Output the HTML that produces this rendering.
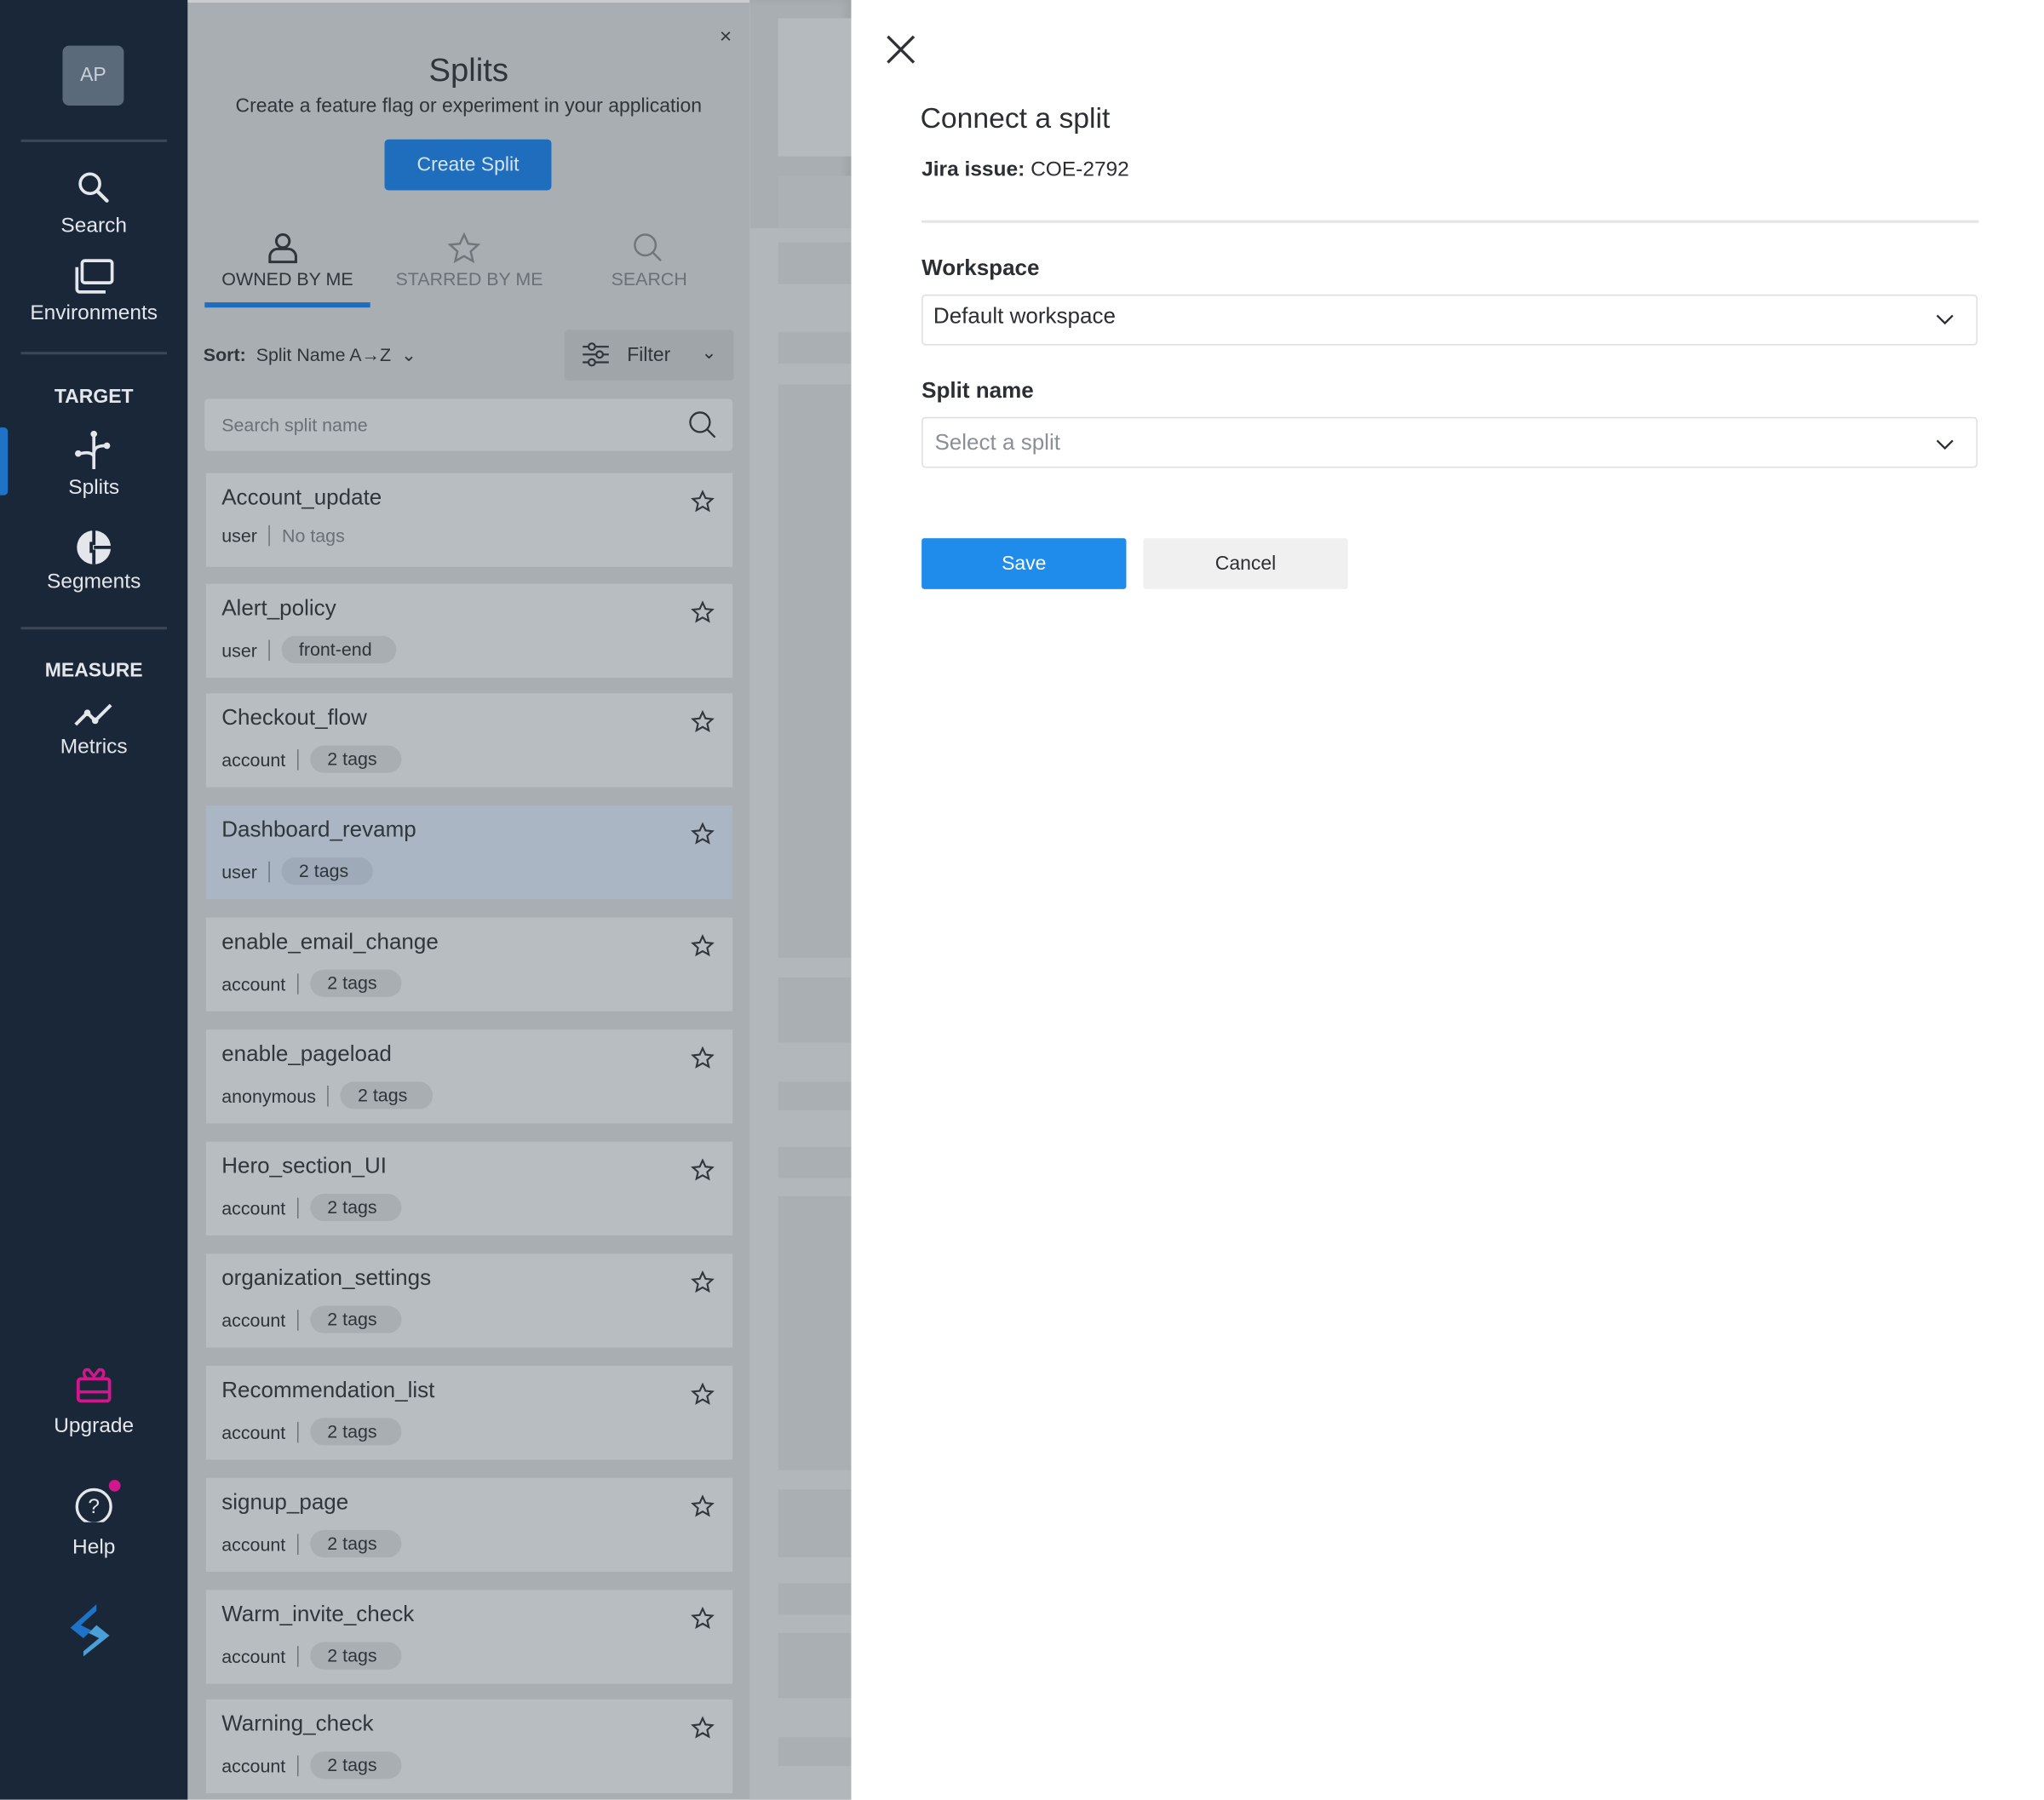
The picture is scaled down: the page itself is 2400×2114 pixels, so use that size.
<!DOCTYPE html>
<html><head><meta charset="utf-8">
<style>
*{box-sizing:border-box;margin:0;padding:0}
html,body{width:2400px;height:2114px;overflow:hidden;background:#fff}
body{font-family:"Liberation Sans",sans-serif}
#w{position:absolute;left:0;top:0;width:1568px;height:1381px;transform:scale(1.5306);transform-origin:0 0;overflow:hidden}
.abs{position:absolute}
.side{left:0;top:0;width:144px;height:1381px;background:#1a2739;color:#e3e6ea}
.lbl{position:absolute;width:144px;text-align:center;font-size:16px;color:#e3e6ea}
.hr{position:absolute;left:16px;width:112px;height:2px;background:#3c4858}
.panel{left:144px;top:0;width:431px;height:1381px;background:#a9aeb2;border-top:2px solid #c9cdd0}
.card{position:absolute;left:14px;width:404px;height:72px;background:#b8bdc1}
.card .t{position:absolute;left:12px;top:9px;font-size:17px;color:#30363c}
.card .m{position:absolute;left:12px;top:40px;font-size:14px;color:#2e343a;display:flex;align-items:center}
.card .bar{width:1px;height:16px;background:#6f767c;margin:0 9px}
.card .tag{background:#a9aeb3;border-radius:11px;padding:2px 19px 3px 13px;font-size:14px;color:#2e343a}
.card svg{position:absolute;right:14px;top:13px}
.strip{left:575px;top:0;width:78px;height:1381px;background:#a9aeb2;box-shadow:inset -4px 0 6px rgba(0,0,0,.06)}
.blk{position:absolute;left:22px;width:56px;background:#b5babe}
.right{left:653px;top:0;width:915px;height:1381px;background:#fff}
</style></head><body><div id="w">

<div class="abs side">
  <div class="abs" style="left:48px;top:35px;width:47px;height:46px;background:#5b6a7b;border-radius:5px;color:#c9d0d8;font-size:15px;text-align:center;line-height:46px">AP</div>
  <div class="hr" style="top:107px"></div>
  <svg class="abs" style="left:58px;top:130px" width="28" height="28" viewBox="0 0 28 28"><circle cx="11" cy="11" r="7.5" fill="none" stroke="#e3e6ea" stroke-width="2.4"/><path d="M16.5 16.5L24 24" stroke="#e3e6ea" stroke-width="2.8" stroke-linecap="round"/></svg>
  <div class="lbl" style="top:165px">Search</div>
  <svg class="abs" style="left:56px;top:198px" width="32" height="30" viewBox="0 0 32 30"><rect x="7" y="2" width="23" height="17" rx="2" fill="none" stroke="#e3e6ea" stroke-width="2.4"/><path d="M3 7v17a2 2 0 0 0 2 2h20" fill="none" stroke="#e3e6ea" stroke-width="2.4"/></svg>
  <div class="lbl" style="top:232px">Environments</div>
  <div class="hr" style="top:270px"></div>
  <div class="lbl" style="top:296px;font-weight:bold;font-size:15px">TARGET</div>
  <div class="abs" style="left:0;top:328px;width:6px;height:52px;background:#1f73c6;border-radius:0 3px 3px 0"></div>
  <svg class="abs" style="left:54px;top:330px" width="36" height="32" viewBox="0 0 36 32"><path d="M18 3v27M18 18c0-5 4-6 9-6M18 20c-2-3-6-3-10-2" fill="none" stroke="#e3e6ea" stroke-width="2.4"/><circle cx="18" cy="3" r="2.5" fill="#e3e6ea"/><circle cx="28" cy="12" r="2.5" fill="#e3e6ea"/><circle cx="6" cy="18" r="2.5" fill="#e3e6ea"/></svg>
  <div class="lbl" style="top:366px">Splits</div>
  <svg class="abs" style="left:58px;top:406px" width="28" height="28" viewBox="0 0 28 28"><circle cx="14" cy="14" r="13" fill="#e3e6ea"/><path d="M14 1v10h-2v6h2v10M14 14h13" stroke="#1a2739" stroke-width="2.5" fill="none"/></svg>
  <div class="lbl" style="top:438px">Segments</div>
  <div class="hr" style="top:481px"></div>
  <div class="lbl" style="top:506px;font-weight:bold;font-size:15px">MEASURE</div>
  <svg class="abs" style="left:55px;top:538px" width="34" height="22" viewBox="0 0 34 22"><path d="M3 18l9-9 6 6 12-12" fill="none" stroke="#e3e6ea" stroke-width="2.6"/><circle cx="12" cy="9" r="2.5" fill="#e3e6ea"/><circle cx="18" cy="15" r="2.5" fill="#e3e6ea"/></svg>
  <div class="lbl" style="top:565px">Metrics</div>
  <svg class="abs" style="left:57px;top:1047px" width="30" height="30" viewBox="0 0 30 30"><rect x="3" y="11" width="24" height="17" rx="2" fill="none" stroke="#d0178b" stroke-width="2.5"/><path d="M3 21h24M10 11c-4-3-3-8 1-7l4 5 4-5c4-1 5 4 1 7" fill="none" stroke="#d0178b" stroke-width="2.3"/></svg>
  <div class="lbl" style="top:1086px">Upgrade</div>
  <svg class="abs" style="left:56px;top:1134px" width="40" height="34" viewBox="0 0 40 34"><circle cx="16" cy="22" r="13" fill="none" stroke="#e3e6ea" stroke-width="2.2"/><text x="16" y="27" font-size="16" fill="#e3e6ea" text-anchor="middle" font-family="Liberation Sans">?</text><circle cx="32" cy="6" r="4.5" fill="#d0178b"/></svg>
  <div class="lbl" style="top:1179px">Help</div>
  <svg class="abs" style="left:50px;top:1229px" width="38" height="44" viewBox="0 0 38 44"><path d="M24 2L4 20l10 8 6-6-8-4 12-11z" fill="#1f73c6"/><path d="M14 42l20-16-10-8-6 6 8 4-12 10z" fill="#4a9fd6"/></svg>
</div>

<div class="abs panel">
  <div class="abs" style="left:408px;top:18px;font-size:16px;color:#30363c">×</div>
  <div class="abs" style="left:0;width:431px;top:38px;text-align:center;font-size:25px;color:#2f353b">Splits</div>
  <div class="abs" style="left:0;width:431px;top:71px;text-align:center;font-size:15px;color:#2f353b">Create a feature flag or experiment in your application</div>
  <div class="abs" style="left:151px;top:105px;width:128px;height:39px;background:#1f6ebd;border-radius:3px;color:#d7e3ef;font-size:15px;text-align:center;line-height:39px">Create Split</div>
  <svg class="abs" style="left:60px;top:175px" width="26" height="26" viewBox="0 0 26 26"><circle cx="13" cy="8" r="5" fill="none" stroke="#2f353b" stroke-width="2"/><path d="M3 24v-4a6 6 0 0 1 6-6h8a6 6 0 0 1 6 6v4z" fill="none" stroke="#2f353b" stroke-width="2"/></svg>
  <div class="abs" style="left:13px;width:127px;top:204px;text-align:center;font-size:14px;color:#2f353b">OWNED BY ME</div>
  <div class="abs" style="left:13px;top:230px;width:127px;height:4px;background:#1f6ebd"></div>
  <svg class="abs" style="left:199px;top:176px" width="26" height="26" viewBox="0 0 26 26"><path d="M13 2l3.2 7 7.6.8-5.7 5.1 1.7 7.5L13 18.5l-6.8 3.9 1.7-7.5L2.2 9.8l7.6-.8z" fill="none" stroke="#6f767c" stroke-width="1.6"/></svg>
  <div class="abs" style="left:155px;width:122px;top:204px;text-align:center;font-size:14px;color:#6a7077">STARRED BY ME</div>
  <svg class="abs" style="left:340px;top:175px" width="26" height="26" viewBox="0 0 26 26"><circle cx="11" cy="11" r="8" fill="none" stroke="#6f767c" stroke-width="1.6"/><path d="M17 17l6 6" stroke="#6f767c" stroke-width="1.6"/></svg>
  <div class="abs" style="left:300px;width:108px;top:204px;text-align:center;font-size:14px;color:#6a7077">SEARCH</div>
  <div class="abs" style="left:12px;top:262px;font-size:14px;color:#2f353b"><b>Sort:</b>&nbsp; Split Name A→Z &nbsp;⌄</div>
  <div class="abs" style="left:289px;top:251px;width:130px;height:39px;background:#a0a5aa;border-radius:3px"></div>
  <svg class="abs" style="left:302px;top:260px" width="22" height="20" viewBox="0 0 22 20"><path d="M1 4h20M1 10h20M1 16h20" stroke="#2f353b" stroke-width="1.4"/><circle cx="8" cy="4" r="2.5" fill="#a0a5aa" stroke="#2f353b" stroke-width="1.4"/><circle cx="14" cy="10" r="2.5" fill="#a0a5aa" stroke="#2f353b" stroke-width="1.4"/><circle cx="8" cy="16" r="2.5" fill="#a0a5aa" stroke="#2f353b" stroke-width="1.4"/></svg>
  <div class="abs" style="left:337px;top:262px;font-size:15px;color:#2f353b">Filter</div>
  <div class="abs" style="left:394px;top:260px;font-size:14px;color:#2f353b">⌄</div>
  <div class="abs" style="left:13px;top:304px;width:405px;height:40px;background:#b8bdc1;border-radius:3px"></div>
  <div class="abs" style="left:26px;top:316px;font-size:14px;color:#6a7077">Search split name</div>
  <svg class="abs" style="left:384px;top:313px" width="22" height="22" viewBox="0 0 22 22"><circle cx="9" cy="9" r="7.5" fill="none" stroke="#2f353b" stroke-width="1.5"/><path d="M14.5 14.5l6 6" stroke="#2f353b" stroke-width="1.5"/></svg>

  <div class="card" style="top:361px"><div class="t">Account_update</div><div class="m">user<span class="bar"></span><span style="color:#6a7077">No tags</span></div><svg width="18" height="18" viewBox="0 0 26 26"><path d="M13 2l3.2 7 7.6.8-5.7 5.1 1.7 7.5L13 18.5l-6.8 3.9 1.7-7.5L2.2 9.8l7.6-.8z" fill="none" stroke="#30363c" stroke-width="2"/></svg></div>
  <div class="card" style="top:446px"><div class="t">Alert_policy</div><div class="m">user<span class="bar"></span><span class="tag">front-end</span></div><svg width="18" height="18" viewBox="0 0 26 26"><path d="M13 2l3.2 7 7.6.8-5.7 5.1 1.7 7.5L13 18.5l-6.8 3.9 1.7-7.5L2.2 9.8l7.6-.8z" fill="none" stroke="#30363c" stroke-width="2"/></svg></div>
  <div class="card" style="top:530px"><div class="t">Checkout_flow</div><div class="m">account<span class="bar"></span><span class="tag">2 tags</span></div><svg width="18" height="18" viewBox="0 0 26 26"><path d="M13 2l3.2 7 7.6.8-5.7 5.1 1.7 7.5L13 18.5l-6.8 3.9 1.7-7.5L2.2 9.8l7.6-.8z" fill="none" stroke="#30363c" stroke-width="2"/></svg></div>
  <div class="card" style="top:616px;background:#aab6c3"><div class="t">Dashboard_revamp</div><div class="m">user<span class="bar"></span><span class="tag" style="background:#9eaab7">2 tags</span></div><svg width="18" height="18" viewBox="0 0 26 26"><path d="M13 2l3.2 7 7.6.8-5.7 5.1 1.7 7.5L13 18.5l-6.8 3.9 1.7-7.5L2.2 9.8l7.6-.8z" fill="none" stroke="#30363c" stroke-width="2"/></svg></div>
  <div class="card" style="top:702px"><div class="t">enable_email_change</div><div class="m">account<span class="bar"></span><span class="tag">2 tags</span></div><svg width="18" height="18" viewBox="0 0 26 26"><path d="M13 2l3.2 7 7.6.8-5.7 5.1 1.7 7.5L13 18.5l-6.8 3.9 1.7-7.5L2.2 9.8l7.6-.8z" fill="none" stroke="#30363c" stroke-width="2"/></svg></div>
  <div class="card" style="top:788px"><div class="t">enable_pageload</div><div class="m">anonymous<span class="bar"></span><span class="tag">2 tags</span></div><svg width="18" height="18" viewBox="0 0 26 26"><path d="M13 2l3.2 7 7.6.8-5.7 5.1 1.7 7.5L13 18.5l-6.8 3.9 1.7-7.5L2.2 9.8l7.6-.8z" fill="none" stroke="#30363c" stroke-width="2"/></svg></div>
  <div class="card" style="top:874px"><div class="t">Hero_section_UI</div><div class="m">account<span class="bar"></span><span class="tag">2 tags</span></div><svg width="18" height="18" viewBox="0 0 26 26"><path d="M13 2l3.2 7 7.6.8-5.7 5.1 1.7 7.5L13 18.5l-6.8 3.9 1.7-7.5L2.2 9.8l7.6-.8z" fill="none" stroke="#30363c" stroke-width="2"/></svg></div>
  <div class="card" style="top:960px"><div class="t">organization_settings</div><div class="m">account<span class="bar"></span><span class="tag">2 tags</span></div><svg width="18" height="18" viewBox="0 0 26 26"><path d="M13 2l3.2 7 7.6.8-5.7 5.1 1.7 7.5L13 18.5l-6.8 3.9 1.7-7.5L2.2 9.8l7.6-.8z" fill="none" stroke="#30363c" stroke-width="2"/></svg></div>
  <div class="card" style="top:1046px"><div class="t">Recommendation_list</div><div class="m">account<span class="bar"></span><span class="tag">2 tags</span></div><svg width="18" height="18" viewBox="0 0 26 26"><path d="M13 2l3.2 7 7.6.8-5.7 5.1 1.7 7.5L13 18.5l-6.8 3.9 1.7-7.5L2.2 9.8l7.6-.8z" fill="none" stroke="#30363c" stroke-width="2"/></svg></div>
  <div class="card" style="top:1132px"><div class="t">signup_page</div><div class="m">account<span class="bar"></span><span class="tag">2 tags</span></div><svg width="18" height="18" viewBox="0 0 26 26"><path d="M13 2l3.2 7 7.6.8-5.7 5.1 1.7 7.5L13 18.5l-6.8 3.9 1.7-7.5L2.2 9.8l7.6-.8z" fill="none" stroke="#30363c" stroke-width="2"/></svg></div>
  <div class="card" style="top:1218px"><div class="t">Warm_invite_check</div><div class="m">account<span class="bar"></span><span class="tag">2 tags</span></div><svg width="18" height="18" viewBox="0 0 26 26"><path d="M13 2l3.2 7 7.6.8-5.7 5.1 1.7 7.5L13 18.5l-6.8 3.9 1.7-7.5L2.2 9.8l7.6-.8z" fill="none" stroke="#30363c" stroke-width="2"/></svg></div>
  <div class="card" style="top:1302px"><div class="t">Warning_check</div><div class="m">account<span class="bar"></span><span class="tag">2 tags</span></div><svg width="18" height="18" viewBox="0 0 26 26"><path d="M13 2l3.2 7 7.6.8-5.7 5.1 1.7 7.5L13 18.5l-6.8 3.9 1.7-7.5L2.2 9.8l7.6-.8z" fill="none" stroke="#30363c" stroke-width="2"/></svg></div>
</div>

<div class="abs strip">
  <div class="abs" style="left:0;top:175px;width:78px;height:1206px;background:#b2b7bb"></div>
  <div class="blk" style="top:14px;height:106px"></div>
  <div class="blk" style="top:135px;height:40px;background:#acb1b5"></div>
  <div class="blk" style="top:186px;height:32px;background:#aaafb3"></div>
  <div class="blk" style="top:255px;height:24px;background:#aaafb3"></div>
  <div class="blk" style="top:295px;height:440px;background:#aaafb3"></div>
  <div class="blk" style="top:750px;height:50px;background:#aaafb3"></div>
  <div class="blk" style="top:830px;height:22px;background:#aaafb3"></div>
  <div class="blk" style="top:880px;height:24px;background:#aaafb3"></div>
  <div class="blk" style="top:918px;height:210px;background:#aaafb3"></div>
  <div class="blk" style="top:1143px;height:52px;background:#aaafb3"></div>
  <div class="blk" style="top:1215px;height:24px;background:#aaafb3"></div>
  <div class="blk" style="top:1253px;height:50px;background:#aaafb3"></div>
  <div class="blk" style="top:1333px;height:22px;background:#aaafb3"></div>
</div>

<div class="abs right">
  <svg class="abs" style="left:26px;top:26px" width="24" height="24" viewBox="0 0 24 24"><path d="M2 2l20 20M22 2L2 22" stroke="#2f3338" stroke-width="2.2"/></svg>
  <div class="abs" style="left:53px;top:78px;font-size:22px;color:#2b2f33">Connect a split</div>
  <div class="abs" style="left:54px;top:122px;font-size:16px;color:#2b2f33"><b>Jira issue:</b> COE-2792</div>
  <div class="abs" style="left:54px;top:169px;width:811px;height:2px;background:#e3e5e8"></div>
  <div class="abs" style="left:54px;top:196px;font-size:17px;font-weight:bold;color:#2b2f33">Workspace</div>
  <div class="abs" style="left:54px;top:226px;width:810px;height:39px;border:1px solid #dcdfe2;border-radius:3px"></div>
  <div class="abs" style="left:63px;top:233px;font-size:17px;color:#2b2f33">Default workspace</div>
  <svg class="abs" style="left:832px;top:240px" width="14" height="10" viewBox="0 0 14 10"><path d="M1 2l6 6 6-6" fill="none" stroke="#2b2f33" stroke-width="1.5"/></svg>
  <div class="abs" style="left:54px;top:290px;font-size:17px;font-weight:bold;color:#2b2f33">Split name</div>
  <div class="abs" style="left:54px;top:320px;width:810px;height:39px;border:1px solid #dcdfe2;border-radius:3px"></div>
  <div class="abs" style="left:64px;top:330px;font-size:17px;color:#8a9096">Select a split</div>
  <svg class="abs" style="left:832px;top:336px" width="14" height="10" viewBox="0 0 14 10"><path d="M1 2l6 6 6-6" fill="none" stroke="#2b2f33" stroke-width="1.5"/></svg>
  <div class="abs" style="left:54px;top:413px;width:157px;height:39px;background:#1f8ceb;border-radius:2px;color:#fff;font-size:15px;text-align:center;line-height:39px">Save</div>
  <div class="abs" style="left:224px;top:413px;width:157px;height:39px;background:#f0f0f0;border-radius:2px;color:#2b2f33;font-size:15px;text-align:center;line-height:39px">Cancel</div>
</div>

</div></body></html>
